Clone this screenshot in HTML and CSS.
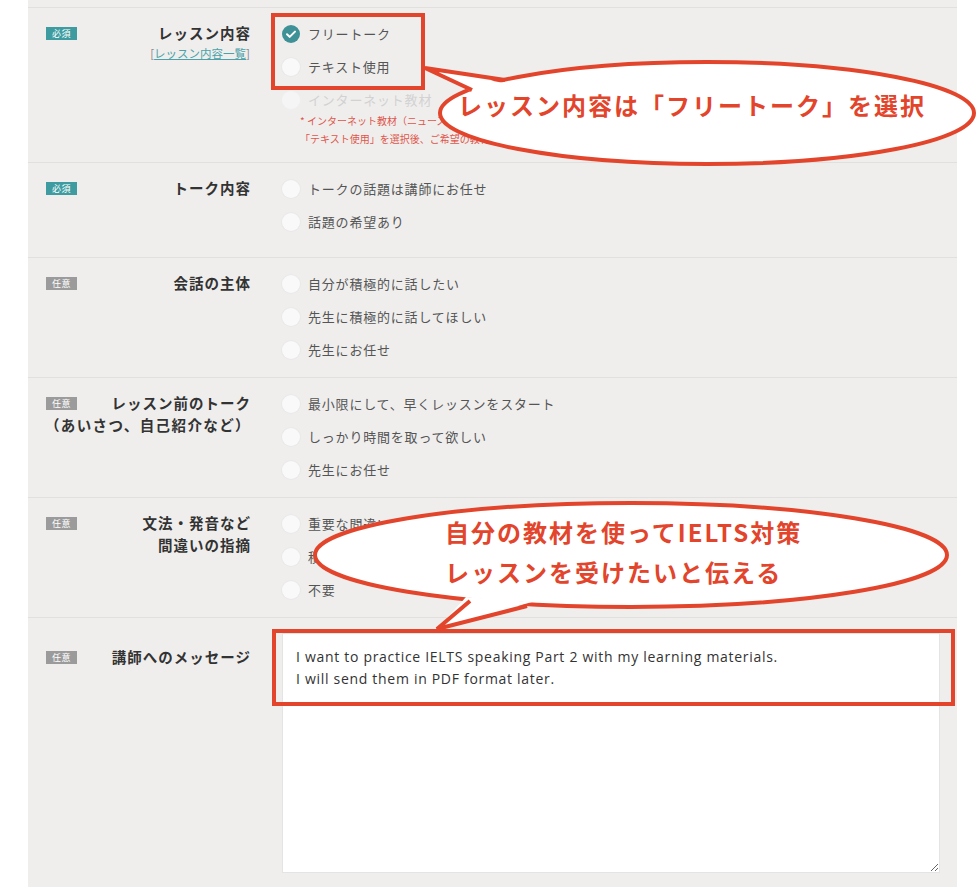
FILE: index.html
```html
<!DOCTYPE html>
<html lang="ja">
<head>
<meta charset="utf-8">
<title>レッスンリクエスト</title>
<link rel="stylesheet" href="styles.css">
</head>
<body>
<div class="page">
  <div class="panel">
    <div class="row">
      <div class="head">
        <span class="badge badge--req">必須</span>
        <div class="label">レッスン内容<div class="sublink">[<a href="#" class="link">レッスン内容一覧</a>]</div></div>
      </div>
      <div class="opts">
        <div class="opt"><span class="radio radio--on"><svg viewBox="0 0 18 18" width="18" height="18"><path d="M5 9.2l2.7 2.7L13 6.6" fill="none" stroke="#fff" stroke-width="2" stroke-linecap="round" stroke-linejoin="round"/></svg></span>フリートーク</div>
        <div class="opt"><span class="radio"></span>テキスト使用</div>
        <div class="opt opt--disabled"><span class="radio"></span>インターネット教材</div>
        <div class="notes">
          <div>* インターネット教材（ニュース記事など）をご希望の場合は、</div>
          <div>「テキスト使用」を選択後、ご希望の教材URLをメッセージ欄にご記入ください。</div>
        </div>
      </div>
    </div>
    <div class="row">
      <div class="head">
        <span class="badge badge--req">必須</span>
        <div class="label">トーク内容</div>
      </div>
      <div class="opts">
        <div class="opt"><span class="radio"></span>トークの話題は講師にお任せ</div>
        <div class="opt"><span class="radio"></span>話題の希望あり</div>
      </div>
    </div>
    <div class="row">
      <div class="head">
        <span class="badge badge--opt">任意</span>
        <div class="label">会話の主体</div>
      </div>
      <div class="opts">
        <div class="opt"><span class="radio"></span>自分が積極的に話したい</div>
        <div class="opt"><span class="radio"></span>先生に積極的に話してほしい</div>
        <div class="opt"><span class="radio"></span>先生にお任せ</div>
      </div>
    </div>
    <div class="row">
      <div class="head">
        <span class="badge badge--opt">任意</span>
        <div class="label">レッスン前のトーク<br><span class="wide">（あいさつ、自己紹介など）</span></div>
      </div>
      <div class="opts">
        <div class="opt"><span class="radio"></span>最小限にして、早くレッスンをスタート</div>
        <div class="opt"><span class="radio"></span>しっかり時間を取って欲しい</div>
        <div class="opt"><span class="radio"></span>先生にお任せ</div>
      </div>
    </div>
    <div class="row">
      <div class="head">
        <span class="badge badge--opt">任意</span>
        <div class="label">文法・発音など<br>間違いの指摘</div>
      </div>
      <div class="opts">
        <div class="opt"><span class="radio"></span>重要な間違いのみ指摘してほしい</div>
        <div class="opt"><span class="radio"></span>積極的に指摘してほしい</div>
        <div class="opt"><span class="radio"></span>不要</div>
      </div>
    </div>
    <div class="row row--msg">
      <div class="head head--msg">
        <span class="badge badge--opt">任意</span>
        <div class="label">講師へのメッセージ</div>
      </div>
      <div class="opts">
        <textarea class="message">I want to practice IELTS speaking Part 2 with my learning materials.
I will send them in PDF format later.</textarea>
      </div>
    </div>
  </div>

  <svg class="overlay" width="980" height="887" viewBox="0 0 980 887">
    <rect x="273" y="15" width="150" height="73" fill="none" stroke="#e2452b" stroke-width="4"/>
    <ellipse cx="707" cy="113" rx="267" ry="51" fill="#fff" stroke="#e2452b" stroke-width="4"/>
    <polygon points="474,93 425,68 509,84" fill="#fff"/>
    <polyline points="472,90 425,68 505,80" fill="none" stroke="#e2452b" stroke-width="4" stroke-linejoin="miter"/>
    <text class="callout-text" x="458" y="115">レッスン内容は「フリートーク」を選択</text>

    <rect x="274" y="631" width="679" height="73" fill="none" stroke="#e2452b" stroke-width="4"/>
    <ellipse cx="631" cy="555" rx="316" ry="52" fill="#fff" stroke="#e2452b" stroke-width="4"/>
    <polygon points="466,597 437,629 532,602" fill="#fff"/>
    <polyline points="470,601 437,629 527,606" fill="none" stroke="#e2452b" stroke-width="4" stroke-linejoin="miter"/>
    <text class="callout-text" x="445" y="542">自分の教材を使ってIELTS対策</text>
    <text class="callout-text" x="445" y="582">レッスンを受けたいと伝える</text>
  </svg>
</div>
</body>
</html>
```
FILE: styles.css
```css
body {
  margin: 0;
  background: #ffffff;
  font-family: "Noto Sans CJK JP", "Noto Sans", sans-serif;
}

.page {
  position: relative;
  width: 980px;
  height: 887px;
  overflow: hidden;
}

.panel {
  margin-left: 28px;
  width: 929px;
  background: #efeeed;
  padding-top: 7px;
}

.row {
  display: flex;
  box-sizing: border-box;
  min-height: 95px;
  padding: 9px 0 11px;
  border-top: 1px solid #e1e0df;
}

.row--msg {
  padding-bottom: 40px;
}

.head {
  box-sizing: border-box;
  width: 222px;
  flex: none;
  padding-left: 10px;
  display: grid;
  grid-template-columns: 1fr;
  align-items: start;
}

.head > * {
  grid-row: 1;
  grid-column: 1;
}

.head--msg {
  padding-top: 14px;
}

.badge {
  justify-self: start;
  margin-top: 10px;
  margin-left: 8px;
  width: 31px;
  height: 13px;
  line-height: 13px;
  font-size: 9px;
  text-align: center;
  color: #ffffff;
  letter-spacing: 0.5px;
}

.badge--req {
  background: #3e9ca1;
}

.badge--opt {
  background: #9b9b9b;
}

.label {
  justify-self: end;
  white-space: nowrap;
  text-align: right;
  font-size: 14.5px;
  font-weight: bold;
  line-height: 22px;
  padding-top: 5px;
  color: #333333;
  letter-spacing: 1px;
  margin-right: -1px;
}

.wide {
  letter-spacing: 1.4px;
}

.sublink {
  font-size: 11.5px;
  font-weight: normal;
  line-height: 18px;
  color: #888888;
  letter-spacing: 0;
  margin-right: 1px;
}

.link {
  color: #4aa2a8;
  text-decoration: underline;
}

.opts {
  margin-left: 32px;
}

.opt {
  display: flex;
  align-items: center;
  height: 33px;
  font-size: 13px;
  color: #555555;
  letter-spacing: 0.8px;
}

.opt--disabled {
  color: #d2d2d2;
}

.radio {
  box-sizing: border-box;
  width: 18px;
  height: 18px;
  border-radius: 50%;
  background: #f9f9f9;
  box-shadow: 0 0 0 1px #e9e9e9;
  margin-right: 8px;
  flex: none;
  display: flex;
}

.opt--disabled .radio {
  background: #f5f5f5;
  box-shadow: 0 0 0 1px #efefef;
}

.radio--on {
  background: #3e9196;
  box-shadow: none;
}

.notes {
  margin: -4px 0 3px 18px;
  font-size: 10px;
  line-height: 18px;
  color: #e0554a;
  white-space: nowrap;
}

.message {
  display: block;
  margin-top: 6px;
  box-sizing: border-box;
  width: 658px;
  height: 240px;
  padding: 12px 13px;
  border: 1px solid #e4e4e4;
  background: #ffffff;
  font-family: "Open Sans", "Liberation Sans", sans-serif;
  font-size: 14px;
  line-height: 22px;
  letter-spacing: 0.7px;
  color: #333333;
}

.overlay {
  position: absolute;
  top: 0;
  left: 0;
  pointer-events: none;
}

.callout-text {
  font-family: "Noto Sans CJK JP", sans-serif;
  font-weight: bold;
  font-size: 24px;
  letter-spacing: 2px;
  fill: #e2452b;
}
```
